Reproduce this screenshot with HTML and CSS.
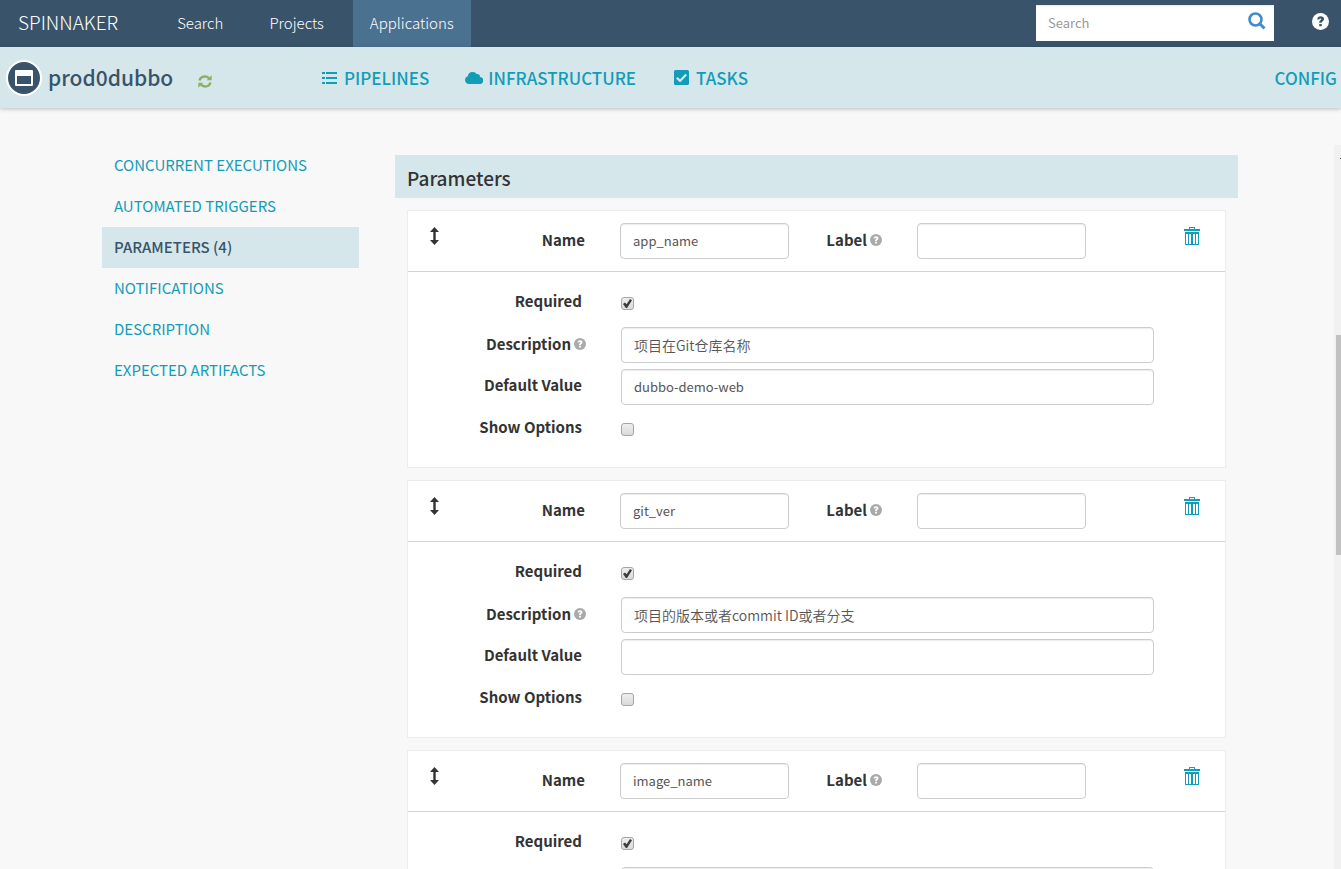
FILE: index.html
```html
<!DOCTYPE html>
<html lang="en">
<head>
<meta charset="utf-8">
<meta name="viewport" content="width=device-width, initial-scale=1">
<title>prod0dubbo · Spinnaker</title>
<link rel="stylesheet" href="styles.css">
</head>
<body>
<svg class="sprite" aria-hidden="true">
  <symbol id="help" viewBox="0 0 12 12">
    <circle cx="6" cy="6" r="6" fill="currentColor"/>
    <path class="cutout" d="M3.700 4.600C3.700 3 4.700 2.300 6.100 2.300c1.400 0 2.400.7 2.400 1.900 0 1.600-1.600 1.500-1.600 2.700H5.100c0-1.800 1.400-1.800 1.400-2.600 0-.3-.2-.5-.6-.5-.5 0-.7.300-.7.800zM5.100 7.700h1.800v1.700H5.100z"/>
  </symbol>
  <symbol id="drag" viewBox="0 0 9 18">
    <path fill="currentColor" d="M4.500 0 9 5H5.700v8H9l-4.500 5L0 13h3.300V5H0z"/>
  </symbol>
  <symbol id="trash" viewBox="0 0 16 18">
    <path fill="currentColor" d="M5 0h6v2h5v2H0V2h5zm1 1v1h4V1zM1 5h14v13H1zm1 2v10h2V7zm3 0v10h2V7zm4 0v10h2V7zm3 0v10h2V7z" fill-rule="evenodd"/>
  </symbol>
</svg>

<header class="topnav">
  <a class="brand" href="#">SPINNAKER</a>
  <nav class="topnav-links" aria-label="Main">
    <a class="topnav-link" href="#">Search</a>
    <a class="topnav-link" href="#">Projects</a>
    <a class="topnav-link active" href="#">Applications</a>
  </nav>
  <form class="search">
    <input class="search-input" type="search" placeholder="Search" aria-label="Search">
    <button class="search-button" type="button" aria-label="Run search">
      <svg width="18" height="18" viewBox="0 0 18 18" fill="none" stroke="currentColor"><circle cx="7.500" cy="7.500" r="6" stroke-width="2.600"/><path d="m12 12 4.500 4.500" stroke-width="3"/></svg>
    </button>
  </form>
  <button class="nav-help" type="button" aria-label="Help"><svg width="17" height="17"><use href="#help"/></svg></button>
</header>

<div class="appbar">
  <div class="app">
    <span class="app-icon"><svg width="20" height="18" viewBox="0 0 20 18"><path fill="currentColor" fill-rule="evenodd" d="M2 1h16a1 1 0 0 1 1 1v14a1 1 0 0 1-1 1H2a1 1 0 0 1-1-1V2a1 1 0 0 1 1-1zm1 6v8h14V7z"/></svg></span>
    <h1 class="app-name">prod0dubbo</h1>
    <button class="refresh" type="button" aria-label="Refresh">
      <svg width="14" height="13" viewBox="0 0 14 13" fill="none" stroke="currentColor" stroke-width="2.400"><path d="M1.500 5.500C2.200 3 4.300 1.500 7 1.500c1.700 0 3 .6 4.200 1.800M12.500 7.500c-.7 2.500-2.800 4-5.500 4-1.700 0-3-.6-4.200-1.800"/><path d="M13.700.3V5.300H8.700zM.3 12.700V7.700h5z" fill="currentColor" stroke="none"/></svg>
    </button>
  </div>
  <nav class="tabs" aria-label="Application">
    <a class="tab" href="#"><svg width="15" height="12" viewBox="0 0 15 12" fill="currentColor"><path d="M0 0h3v2H0zM4 0h11v2H4zM0 5h3v2H0zM4 5h11v2H4zM0 10h3v2H0zM4 10h11v2H4z"/></svg>PIPELINES</a>
    <a class="tab tab-cloud" href="#"><svg width="18" height="13" viewBox="0 0 18 13"><path fill="currentColor" d="M4 13a4 4 0 0 1-1.200-7.800A5 5 0 0 1 11.800 3a3 3 0 0 1 3.200 3A3.500 3.500 0 0 1 14.500 13z"/></svg>INFRASTRUCTURE</a>
    <a class="tab" href="#"><svg width="15" height="15" viewBox="0 0 15 15"><rect width="15" height="15" rx="1.500" fill="currentColor"/><path d="m2.800 7.700 3.200 3.200 6.200-6.400" fill="none" stroke="#d6e7eb" stroke-width="2.200"/></svg>TASKS</a>
  </nav>
  <a class="tab config" href="#">CONFIG</a>
</div>

<div class="pane">
  <div class="layout">
    <nav class="side" aria-label="Pipeline sections">
      <a class="side-link" href="#">CONCURRENT EXECUTIONS</a>
      <a class="side-link" href="#">AUTOMATED TRIGGERS</a>
      <a class="side-link active" href="#">PARAMETERS (4)</a>
      <a class="side-link" href="#">NOTIFICATIONS</a>
      <a class="side-link" href="#">DESCRIPTION</a>
      <a class="side-link" href="#">EXPECTED ARTIFACTS</a>
    </nav>

    <main class="main">
      <h2 class="title">Parameters</h2>
      <div class="cards">
        <section class="card">
          <div class="card-head">
            <div class="name-cell"><svg class="drag" width="9" height="18"><use href="#drag"/></svg><label class="label" for="name1">Name</label></div>
            <input class="field" id="name1" type="text" value="app_name">
            <div class="label-cell"><label class="label" for="label1">Label</label><svg class="help" width="12" height="12"><use href="#help"/></svg></div>
            <input class="field" id="label1" type="text">
            <button class="trash" type="button" aria-label="Remove parameter"><svg width="16" height="18"><use href="#trash"/></svg></button>
          </div>
          <div class="card-body">
            <div class="label-cell plain"><label class="label" for="req1">Required</label></div>
            <input class="check" id="req1" type="checkbox" checked>
            <div class="label-cell"><label class="label" for="desc1">Description</label><svg class="help" width="12" height="12"><use href="#help"/></svg></div>
            <input class="field cjk" id="desc1" type="text" value="项目在Git仓库名称">
            <div class="label-cell plain"><label class="label" for="def1">Default Value</label></div>
            <input class="field" id="def1" type="text" value="dubbo-demo-web">
            <div class="label-cell plain"><label class="label" for="opt1">Show Options</label></div>
            <input class="check" id="opt1" type="checkbox">
          </div>
        </section>

        <section class="card">
          <div class="card-head">
            <div class="name-cell"><svg class="drag" width="9" height="18"><use href="#drag"/></svg><label class="label" for="name2">Name</label></div>
            <input class="field" id="name2" type="text" value="git_ver">
            <div class="label-cell"><label class="label" for="label2">Label</label><svg class="help" width="12" height="12"><use href="#help"/></svg></div>
            <input class="field" id="label2" type="text">
            <button class="trash" type="button" aria-label="Remove parameter"><svg width="16" height="18"><use href="#trash"/></svg></button>
          </div>
          <div class="card-body">
            <div class="label-cell plain"><label class="label" for="req2">Required</label></div>
            <input class="check" id="req2" type="checkbox" checked>
            <div class="label-cell"><label class="label" for="desc2">Description</label><svg class="help" width="12" height="12"><use href="#help"/></svg></div>
            <input class="field cjk" id="desc2" type="text" value="项目的版本或者commit ID或者分支">
            <div class="label-cell plain"><label class="label" for="def2">Default Value</label></div>
            <input class="field" id="def2" type="text">
            <div class="label-cell plain"><label class="label" for="opt2">Show Options</label></div>
            <input class="check" id="opt2" type="checkbox">
          </div>
        </section>

        <section class="card">
          <div class="card-head">
            <div class="name-cell"><svg class="drag" width="9" height="18"><use href="#drag"/></svg><label class="label" for="name3">Name</label></div>
            <input class="field" id="name3" type="text" value="image_name">
            <div class="label-cell"><label class="label" for="label3">Label</label><svg class="help" width="12" height="12"><use href="#help"/></svg></div>
            <input class="field" id="label3" type="text">
            <button class="trash" type="button" aria-label="Remove parameter"><svg width="16" height="18"><use href="#trash"/></svg></button>
          </div>
          <div class="card-body">
            <div class="label-cell plain"><label class="label" for="req3">Required</label></div>
            <input class="check" id="req3" type="checkbox" checked>
            <div class="label-cell"></div>
            <input class="field cjk" type="text" aria-label="Description">
          </div>
        </section>
      </div>
    </main>
  </div>
  <div class="scrollbar" aria-hidden="true"><div class="arrow"></div><div class="thumb"></div></div>
</div>
</body>
</html>
```

FILE: styles.css
```css
* { box-sizing: border-box; }

body {
  margin: 0;
  height: 100vh;
  display: flex;
  flex-direction: column;
  overflow: hidden;
  background: #f8f8f8;
  color: #333;
  font-family: "Noto Sans CJK SC", "Noto Sans", sans-serif;
  font-size: 15px;
  line-height: 20px;
}

a { color: inherit; text-decoration: none; }
button { padding: 0; border: 0; background: none; color: inherit; font: inherit; }
svg { flex: none; display: block; }
.sprite { position: absolute; width: 0; height: 0; }
.cutout { fill: var(--cutout, #fff); }

/* Top navigation */
.topnav {
  flex: none;
  display: flex;
  align-items: center;
  height: 47px;
  padding: 0 12px 2px 0;
  background: #39546a;
  color: #fff;
}
.brand { padding: 0 42px 2px 18px; font-size: 19px; font-weight: 300; }
.topnav-links { display: flex; flex: 1; align-self: stretch; margin-bottom: -2px; }
.topnav-link {
  display: flex;
  align-items: center;
  padding: 0 17px 2px;
  margin-right: 12px;
  font-weight: 300;
}
.topnav-link.active { background: #4b7191; }
.search {
  display: flex;
  align-items: center;
  width: 238px;
  height: 36px;
  margin-right: 38px;
  background: #fff;
  box-shadow: inset 0 1px 1px rgba(0, 0, 0, .08);
}
.search-input {
  flex: 1;
  min-width: 0;
  padding: 0 12px;
  border: 0;
  background: none;
  font: inherit;
  font-size: 13px;
}
.search-input::placeholder { color: #999; }
.search-button { padding: 0 8px 4px; color: #428bca; }
.nav-help { --cutout: #39546a; padding-bottom: 2px; }

/* Application bar */
.appbar {
  flex: none;
  display: flex;
  align-items: center;
  height: 61px;
  padding: 0 4px 0 6px;
  background: #d6e7eb;
  box-shadow: 0 1px 4px rgba(0, 0, 0, .25);
}
.app { display: flex; align-items: center; width: 316px; }
.app-icon {
  display: grid;
  place-items: center;
  width: 36px;
  height: 36px;
  border: 2px solid #fff;
  border-radius: 50%;
  background: #39546a;
  color: #fff;
}
.app-name { margin: 0 25px 0 6px; padding-bottom: 1px; color: #39546a; font-size: 21px; font-weight: 500; line-height: 32px; }
.refresh { padding-top: 8px; color: #8bb166; }
.tabs { display: flex; flex: 1; gap: 36px; }
.tab {
  display: flex;
  align-items: center;
  gap: 7px;
  color: #139cb8;
  font-size: 17px;
  font-weight: 500;
  line-height: 24px;
}
.tab-cloud { gap: 5px; margin-right: 2px; }

/* Content pane */
.pane { flex: 1; min-height: 0; display: flex; overflow: hidden; }
.layout {
  flex: 1;
  display: grid;
  grid-template-columns: 257fr 843fr;
  gap: 36px;
  align-items: start;
  padding: 37px 96px 0 102px;
}
.side-link {
  display: block;
  padding: 9px 12px 11px;
  color: #139cb8;
  line-height: 21px;
}
.side-link.active { background: #d6e7eb; color: #39546a; font-weight: 500; }
.main { padding-top: 10px; }
.title {
  margin: 0;
  padding: 11px 12px 8px;
  background: #d6e7eb;
  font-size: 19px;
  font-weight: 500;
  line-height: 24px;
}
.cards { display: grid; gap: 12px; padding: 12px; }

/* Parameter card */
.card { border: 1px solid #ececec; background: #fff; }
.card-head, .card-body { display: grid; column-gap: 35px; align-items: center; }
.card-head {
  grid-template-columns: 177fr 169fr 58fr 169fr 104fr;
  padding: 12px 0;
  border-bottom: 1px solid #d2d2d2;
}
.card-body {
  grid-template-columns: 178fr 533fr 36fr;
  grid-auto-rows: 36px;
  row-gap: 6px;
  padding: 13px 0 20px;
}
.card-body > .label-cell { grid-column: 1; }
.name-cell { display: flex; justify-content: space-between; align-items: center; padding: 0 0 2px 22px; }
.drag { margin-bottom: 8px; }
.label-cell { display: flex; justify-content: flex-end; align-items: center; gap: 3px; padding-bottom: 2px; }
.label-cell.plain { padding: 0 4px 4px 0; }
.label { font-weight: 700; white-space: nowrap; }
.help { color: #aaa; }
.field {
  width: 100%;
  min-width: 0;
  height: 36px;
  padding: 0 12px 2px;
  border: 1px solid #ccc;
  border-radius: 4px;
  background: #fff;
  box-shadow: inset 0 1px 1px rgba(0, 0, 0, .075);
  color: #555;
  font: inherit;
  font-size: 13px;
}
.field.cjk { padding-bottom: 0; font-size: 14px; font-weight: 350; }
.trash { justify-self: center; margin: 0 0 10px 38px; color: #139cb8; }
.check {
  appearance: none;
  display: grid;
  place-items: center;
  width: 13px;
  height: 13px;
  margin: 1px 0 0;
  border: 1px solid #a5a5a5;
  border-radius: 3px;
  background: linear-gradient(#eee, #dadada);
}
.check:checked::after {
  content: "";
  width: 9px;
  height: 9px;
  background: #3c3c3c;
  clip-path: polygon(0 55%, 22% 38%, 40% 58%, 78% 0, 100% 14%, 45% 100%, 32% 100%);
}

/* Scroll indicator */
.scrollbar { width: 7px; margin-top: 37px; padding: 13px 0 0 2px; background: #f1f1f1; }
.arrow { width: 1px; height: 1px; margin: 0 0 176px auto; background: #505050; }
.thumb { height: 220px; background: #c1c1c1; }
```
